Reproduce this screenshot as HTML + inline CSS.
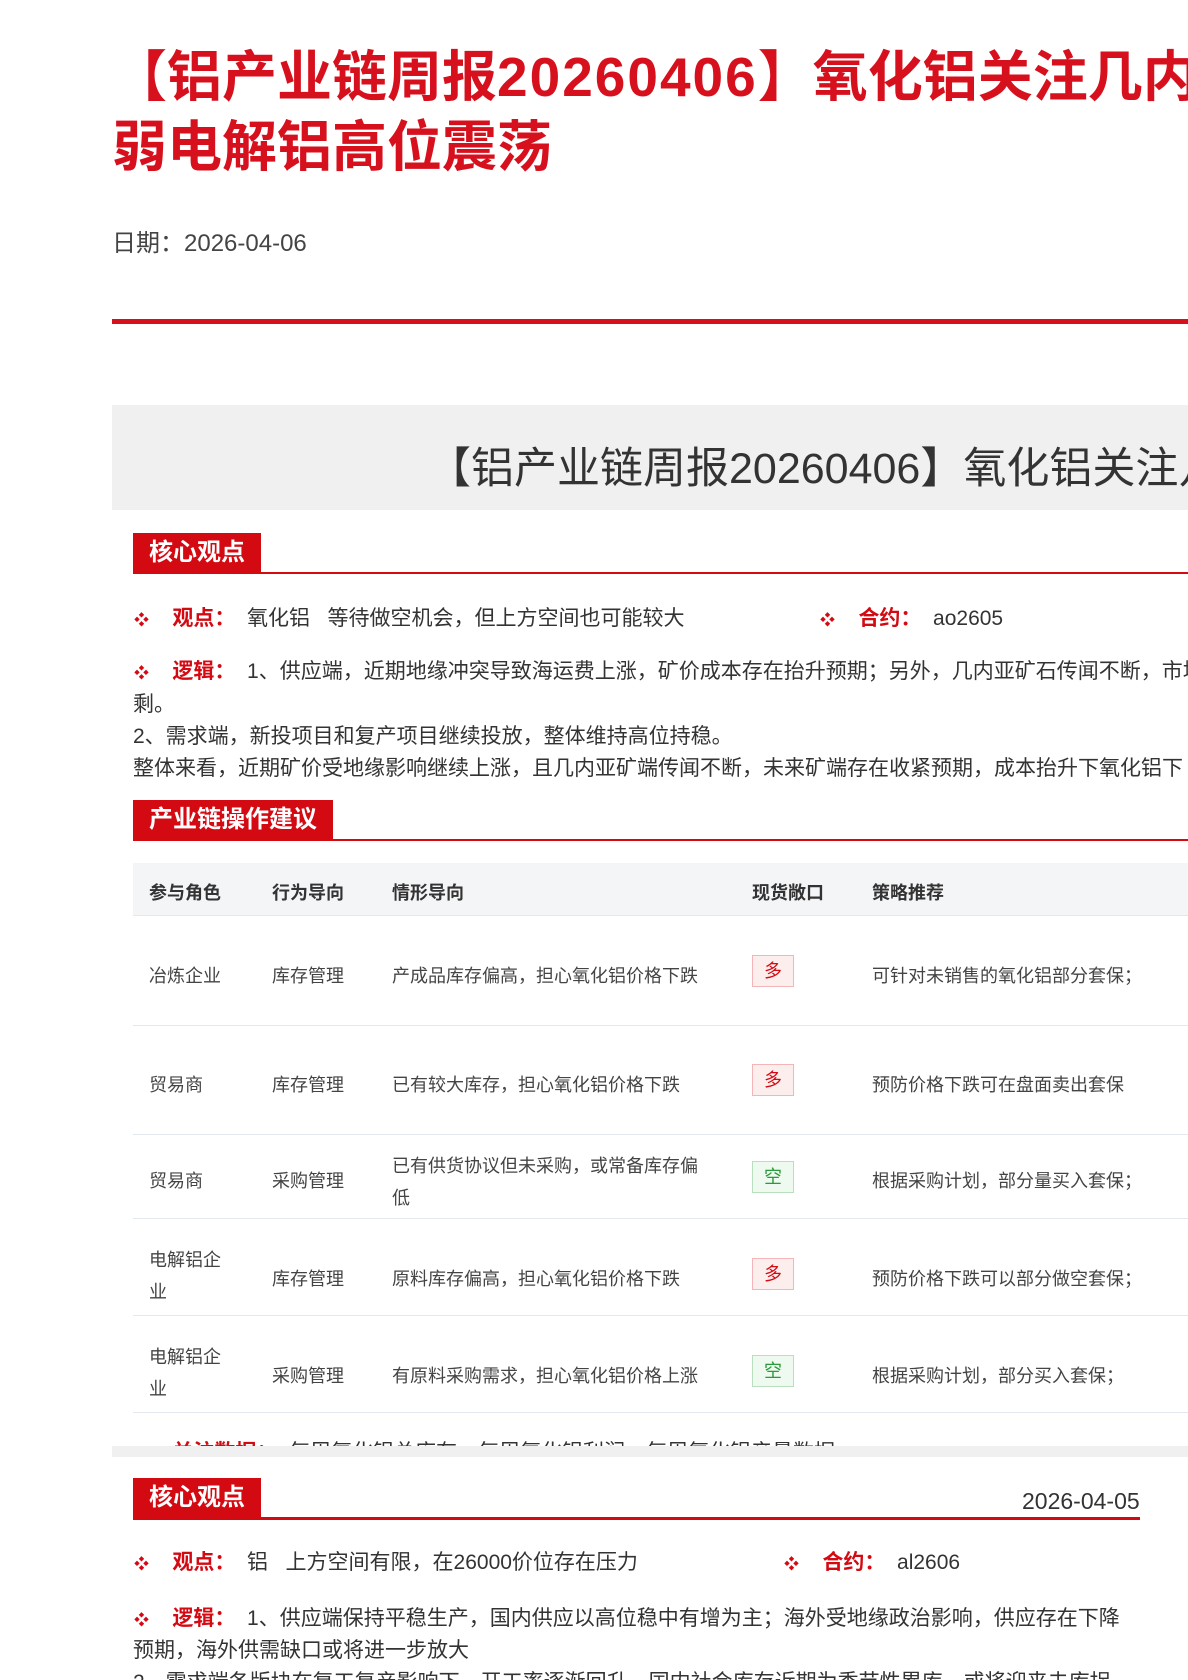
<!DOCTYPE html>
<html><head><meta charset="utf-8"><style>
*{margin:0;padding:0;box-sizing:border-box}
html,body{overflow:hidden}
body{width:1188px;height:1680px;background:#fff;font-family:"Liberation Sans","Noto Sans CJK SC",sans-serif;position:relative;color:#333}
.a{position:absolute;white-space:nowrap}
.t{color:#d7101e;font-weight:bold;font-size:55px;line-height:70px}
.hd{background:#d40a13;color:#fff;font-size:24px;height:40px;line-height:40px;padding:0 16px;font-weight:bold}
.rl{height:2px;background:#d40a13}
.f{font-size:21px;color:#333}
.k{color:#d40a13;font-weight:bold}
.dot{color:#d40a13;font-size:15px}
.th{font-size:18px;font-weight:bold;color:#333}
.td{font-size:18px;color:#444}
.tag{width:42px;height:32px;border:1px solid #f3b5b8;background:#fdeeee;color:#d40a13;text-align:center;line-height:30px;font-size:18px}
.tag.g{border-color:#b8e0bf;background:#eef9f0;color:#2a9a3a}
.hr{height:1px;background:#e3e8ee;left:133px;width:1055px}
</style></head><body>
<div class="a t" style="left:112px;top:42px">【铝产业链周报<span style="letter-spacing:2px">20260406</span>】氧化铝关注几内亚矿端扰动</div>
<div class="a t" style="left:112px;top:112px">弱电解铝高位震荡</div>
<div class="a" style="left:112px;top:223px;font-size:24px;color:#444">日期：2026-04-06</div>
<div class="a" style="left:112px;top:319px;width:1076px;height:5px;background:#d7101e"></div>

<div class="a" style="left:112px;top:405px;width:1076px;height:105px;background:#f0f0f0"></div>
<div class="a" style="left:428px;top:434px;font-size:43px;color:#333">【铝产业链周报20260406】氧化铝关注几内亚矿端</div>

<div class="a hd" style="left:133px;top:533px">核心观点</div>
<div class="a rl" style="left:133px;top:572px;width:1055px"></div>
<div class="a f" style="left:134px;top:602px"><span class="dot">❖</span>&nbsp;&nbsp;&nbsp;&nbsp;<span class="k">观点：</span>&nbsp;&nbsp;氧化铝&nbsp;&nbsp;&nbsp;等待做空机会，但上方空间也可能较大</div>
<div class="a f" style="left:820px;top:602px"><span class="dot">❖</span>&nbsp;&nbsp;&nbsp;&nbsp;<span class="k">合约：</span>&nbsp;&nbsp;ao2605</div>
<div class="a f" style="left:134px;top:655px"><span class="dot">❖</span>&nbsp;&nbsp;&nbsp;&nbsp;<span class="k">逻辑：</span>&nbsp;&nbsp;1、供应端，近期地缘冲突导致海运费上涨，矿价成本存在抬升预期；另外，几内亚矿石传闻不断，市场</div>
<div class="a f" style="left:133px;top:688px">剩。</div>
<div class="a f" style="left:133px;top:720px">2、需求端，新投项目和复产项目继续投放，整体维持高位持稳。</div>
<div class="a f" style="left:133px;top:752px">整体来看，近期矿价受地缘影响继续上涨，且几内亚矿端传闻不断，未来矿端存在收紧预期，成本抬升下氧化铝下</div>

<div class="a hd" style="left:133px;top:800px">产业链操作建议</div>
<div class="a rl" style="left:133px;top:839px;width:1055px"></div>

<div class="a" style="left:133px;top:863px;width:1055px;height:53px;background:#f4f5f7;border-bottom:1px solid #e3e8ee"></div>
<div class="a th" style="left:149px;top:879px">参与角色</div>
<div class="a th" style="left:272px;top:879px">行为导向</div>
<div class="a th" style="left:392px;top:879px">情形导向</div>
<div class="a th" style="left:752px;top:879px">现货敞口</div>
<div class="a th" style="left:872px;top:879px">策略推荐</div>

<div class="a td" style="left:149px;top:962px">冶炼企业</div>
<div class="a td" style="left:272px;top:962px">库存管理</div>
<div class="a td" style="left:392px;top:962px">产成品库存偏高，担心氧化铝价格下跌</div>
<div class="a tag" style="left:752px;top:955px">多</div>
<div class="a td" style="left:872px;top:962px">可针对未销售的氧化铝部分套保；</div>
<div class="a hr" style="top:1025px"></div>

<div class="a td" style="left:149px;top:1071px">贸易商</div>
<div class="a td" style="left:272px;top:1071px">库存管理</div>
<div class="a td" style="left:392px;top:1071px">已有较大库存，担心氧化铝价格下跌</div>
<div class="a tag" style="left:752px;top:1064px">多</div>
<div class="a td" style="left:872px;top:1071px">预防价格下跌可在盘面卖出套保</div>
<div class="a hr" style="top:1134px"></div>

<div class="a td" style="left:149px;top:1167px">贸易商</div>
<div class="a td" style="left:272px;top:1167px">采购管理</div>
<div class="a td" style="left:392px;top:1150px;line-height:32px">已有供货协议但未采购，或常备库存偏<br>低</div>
<div class="a tag g" style="left:752px;top:1161px">空</div>
<div class="a td" style="left:872px;top:1167px">根据采购计划，部分量买入套保；</div>
<div class="a hr" style="top:1218px"></div>

<div class="a td" style="left:149px;top:1244px;line-height:32px">电解铝企<br>业</div>
<div class="a td" style="left:272px;top:1265px">库存管理</div>
<div class="a td" style="left:392px;top:1265px">原料库存偏高，担心氧化铝价格下跌</div>
<div class="a tag" style="left:752px;top:1258px">多</div>
<div class="a td" style="left:872px;top:1265px">预防价格下跌可以部分做空套保；</div>
<div class="a hr" style="top:1315px"></div>

<div class="a td" style="left:149px;top:1341px;line-height:32px">电解铝企<br>业</div>
<div class="a td" style="left:272px;top:1362px">采购管理</div>
<div class="a td" style="left:392px;top:1362px">有原料采购需求，担心氧化铝价格上涨</div>
<div class="a tag g" style="left:752px;top:1355px">空</div>
<div class="a td" style="left:872px;top:1362px">根据采购计划，部分买入套保；</div>
<div class="a hr" style="top:1412px"></div>

<div class="a" style="left:112px;top:1434px;width:1076px;height:12px;overflow:hidden">
<div class="a f" style="left:22px;top:2px"><span class="dot">❖</span>&nbsp;&nbsp;&nbsp;&nbsp;<span class="k">关注数据：</span>&nbsp;&nbsp;每周氧化铝总库存，每周氧化铝利润，每周氧化铝产量数据</div>
</div>
<div class="a" style="left:112px;top:1446px;width:1076px;height:11px;background:#f0f0f0"></div>

<div class="a hd" style="left:133px;top:1478px">核心观点</div>
<div class="a" style="left:1022px;top:1488px;font-size:23px;color:#333">2026-04-05</div>
<div class="a rl" style="left:133px;top:1517px;width:1007px;height:3px"></div>
<div class="a f" style="left:134px;top:1546px"><span class="dot">❖</span>&nbsp;&nbsp;&nbsp;&nbsp;<span class="k">观点：</span>&nbsp;&nbsp;铝&nbsp;&nbsp;&nbsp;上方空间有限，在26000价位存在压力</div>
<div class="a f" style="left:784px;top:1546px"><span class="dot">❖</span>&nbsp;&nbsp;&nbsp;&nbsp;<span class="k">合约：</span>&nbsp;&nbsp;al2606</div>
<div class="a f" style="left:134px;top:1602px"><span class="dot">❖</span>&nbsp;&nbsp;&nbsp;&nbsp;<span class="k">逻辑：</span>&nbsp;&nbsp;1、供应端保持平稳生产，国内供应以高位稳中有增为主；海外受地缘政治影响，供应存在下降</div>
<div class="a f" style="left:133px;top:1634px">预期，海外供需缺口或将进一步放大</div>
<div class="a f" style="left:133px;top:1666px">2、需求端各版块在复工复产影响下，开工率逐渐回升，国内社会库存近期为季节性累库，或将迎来去库拐</div>
</body></html>
